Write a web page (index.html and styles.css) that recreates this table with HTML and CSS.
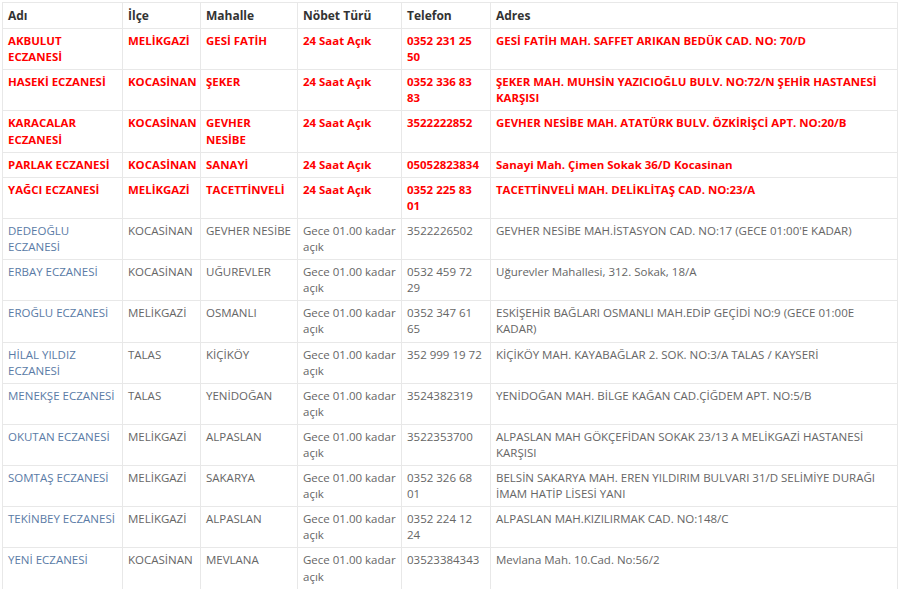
FILE: index.html
```html
<!DOCTYPE html>
<html lang="tr">
<head>
<meta charset="utf-8">
<title>Nöbetçi Eczaneler</title>
<link rel="stylesheet" href="styles.css">
</head>
<body>
<div class="wrap">
<table class="eczane">
<colgroup>
<col class="c-ad"><col class="c-ilce"><col class="c-mah"><col class="c-tur"><col class="c-tel"><col class="c-adres">
</colgroup>
<thead>
<tr><th>Adı</th><th>İlçe</th><th>Mahalle</th><th>Nöbet Türü</th><th>Telefon</th><th>Adres</th></tr>
</thead>
<tbody>
<tr class="acik"><td>AKBULUT ECZANESİ</td><td>MELİKGAZİ</td><td>GESİ FATİH</td><td>24 Saat Açık</td><td>0352 231 25 50</td><td>GESİ FATİH MAH. SAFFET ARIKAN BEDÜK CAD. NO: 70/D</td></tr>
<tr class="acik"><td>HASEKİ ECZANESİ</td><td>KOCASİNAN</td><td>ŞEKER</td><td>24 Saat Açık</td><td>0352 336 83 83</td><td>ŞEKER MAH. MUHSİN YAZICIOĞLU BULV. NO:72/N ŞEHİR HASTANESİ KARŞISI</td></tr>
<tr class="acik"><td>KARACALAR ECZANESİ</td><td>KOCASİNAN</td><td>GEVHER NESİBE</td><td>24 Saat Açık</td><td>3522222852</td><td>GEVHER NESİBE MAH. ATATÜRK BULV. ÖZKİRİŞCİ APT. NO:20/B</td></tr>
<tr class="acik"><td>PARLAK ECZANESİ</td><td>KOCASİNAN</td><td>SANAYİ</td><td>24 Saat Açık</td><td>05052823834</td><td>Sanayi Mah. Çimen Sokak 36/D Kocasinan</td></tr>
<tr class="acik"><td>YAĞCI ECZANESİ</td><td>MELİKGAZİ</td><td>TACETTİNVELİ</td><td>24 Saat Açık</td><td>0352 225 83 01</td><td>TACETTİNVELİ MAH. DELİKLİTAŞ CAD. NO:23/A</td></tr>
<tr><td class="ad">DEDEOĞLU ECZANESİ</td><td>KOCASİNAN</td><td>GEVHER NESİBE</td><td>Gece 01.00 kadar açık</td><td>3522226502</td><td>GEVHER NESİBE MAH.İSTASYON CAD. NO:17 (GECE 01:00'E KADAR)</td></tr>
<tr><td class="ad">ERBAY ECZANESİ</td><td>KOCASİNAN</td><td>UĞUREVLER</td><td>Gece 01.00 kadar açık</td><td>0532 459 72 29</td><td>Uğurevler Mahallesi, 312. Sokak, 18/A</td></tr>
<tr><td class="ad">EROĞLU ECZANESİ</td><td>MELİKGAZİ</td><td>OSMANLI</td><td>Gece 01.00 kadar açık</td><td>0352 347 61 65</td><td>ESKİŞEHİR BAĞLARI OSMANLI MAH.EDİP GEÇİDİ NO:9 (GECE 01:00E KADAR)</td></tr>
<tr><td class="ad">HİLAL YILDIZ ECZANESİ</td><td>TALAS</td><td>KİÇİKÖY</td><td>Gece 01.00 kadar açık</td><td>352 999 19 72</td><td>KİÇİKÖY MAH. KAYABAĞLAR 2. SOK. NO:3/A TALAS / KAYSERİ</td></tr>
<tr><td class="ad">MENEKŞE ECZANESİ</td><td>TALAS</td><td>YENİDOĞAN</td><td>Gece 01.00 kadar açık</td><td>3524382319</td><td>YENİDOĞAN MAH. BİLGE KAĞAN CAD.ÇİĞDEM APT. NO:5/B</td></tr>
<tr><td class="ad">OKUTAN ECZANESİ</td><td>MELİKGAZİ</td><td>ALPASLAN</td><td>Gece 01.00 kadar açık</td><td>3522353700</td><td>ALPASLAN MAH GÖKÇEFİDAN SOKAK 23/13 A MELİKGAZİ HASTANESİ KARŞISI</td></tr>
<tr><td class="ad">SOMTAŞ ECZANESİ</td><td>MELİKGAZİ</td><td>SAKARYA</td><td>Gece 01.00 kadar açık</td><td>0352 326 68 01</td><td>BELSİN SAKARYA MAH. EREN YILDIRIM BULVARI 31/D SELİMİYE DURAĞI İMAM HATİP LİSESİ YANI</td></tr>
<tr><td class="ad">TEKİNBEY ECZANESİ</td><td>MELİKGAZİ</td><td>ALPASLAN</td><td>Gece 01.00 kadar açık</td><td>0352 224 12 24</td><td>ALPASLAN MAH.KIZILIRMAK CAD. NO:148/C</td></tr>
<tr><td class="ad">YENİ ECZANESİ</td><td>KOCASİNAN</td><td>MEVLANA</td><td>Gece 01.00 kadar açık</td><td>03523384343</td><td>Mevlana Mah. 10.Cad. No:56/2</td></tr>
</tbody>
</table>
</div>
</body>
</html>
```

FILE: styles.css
```css
html, body {
  margin: 0;
  padding: 0;
  background: #fff;
}
body {
  font-family: "Open Sans", "Noto Sans", sans-serif;
  font-size: 12px;
  color: #666;
}
.wrap {
  padding: 2px 3px 0 2px;
}
.eczane {
  width: 895px;
  border-collapse: collapse;
  table-layout: fixed;
}
.c-ad { width: 120px; }
.c-ilce { width: 78px; }
.c-mah { width: 97px; }
.c-tur { width: 104px; }
.c-tel { width: 89px; }
.c-adres { width: 407px; }
.eczane th,
.eczane td {
  border: 1px solid #e8e8e8;
  padding: 4px 4px 4px 5px;
  text-align: left;
  vertical-align: top;
  line-height: 16.1px;
}
.eczane th {
  font-size: 12px;
  font-weight: 700;
  color: #333;
  padding-top: 5px;
  padding-bottom: 4px;
}
.eczane td {
  font-size: 11.5px;
}
.eczane tr.acik td {
  color: #f00;
  font-weight: 700;
  font-size: 11.45px;
  padding-right: 6px;
}
.eczane td.ad {
  color: #5a7ba6;
}
```
